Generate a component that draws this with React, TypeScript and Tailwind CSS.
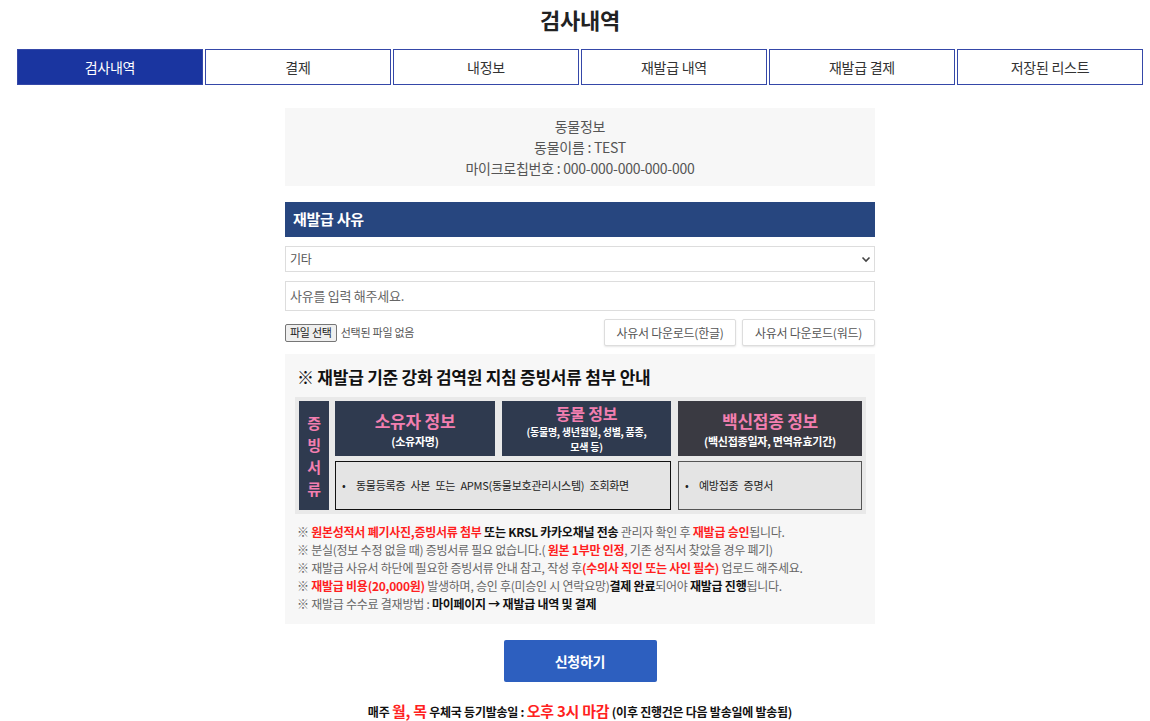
import React from "react";

const font = { fontFamily: '"Noto Sans CJK KR", "Noto Sans", sans-serif' };

export default function App() {
  const tabs = ["검사내역", "결제", "내정보", "재발급 내역", "재발급 결제", "저장된 리스트"];
  return (
    <div className="w-[1150px] h-[721px] bg-white overflow-hidden text-[#333] tracking-[-0.25px]" style={font}>
      <div className="ml-[17px] w-[1126px]">
        <h1 className="text-center text-[22px] font-bold leading-[34px] pt-[2px] text-[#222]">검사내역</h1>
        <div className="mt-[13px] grid grid-cols-6 gap-[2px]">
          {tabs.map((t, i) => (
            <div
              key={t}
              className={
                "h-[36px] flex items-center justify-center text-[14px] border border-[#3548a8] " +
                (i === 0 ? "bg-[#1a35a0] text-white" : "bg-white text-[#333]")
              }
            >
              {t}
            </div>
          ))}
        </div>

        <div className="mx-auto w-[590px] mt-[23px]">
          <div className="bg-[#f7f7f7] h-[78px] pt-[1px] flex flex-col items-center justify-center text-[14px] text-[#555] leading-[21px]">
            <div>동물정보</div>
            <div>동물이름 : TEST</div>
            <div>마이크로칩번호 : 000-000-000-000-000</div>
          </div>

          <div className="mt-[16px] h-[35px] bg-[#27467f] flex items-center pl-[8px] text-white text-[15px] font-bold">
            재발급 사유
          </div>

          <div className="mt-[9px] h-[26px] border border-[#ddd] flex items-center justify-between pl-[4px] pr-[3px] text-[12px] text-[#555]">
            <span>기타</span>
            <svg width="10" height="10" viewBox="0 0 10 10">
              <path d="M1.5 3.5 L5 7 L8.5 3.5" stroke="#444" strokeWidth="1.6" fill="none" />
            </svg>
          </div>

          <div className="mt-[9px] h-[30px] border border-[#ddd] flex items-center pl-[4px] text-[13px] text-[#666]">
            사유를 입력 해주세요.
          </div>

          <div className="mt-[8px] flex items-center justify-between">
            <div className="flex items-center gap-[4px]">
              <div className="h-[18px] px-[4px] flex items-center text-[11px] text-[#222] bg-[#efefef] border border-[#767676] rounded-[2px]">
                파일 선택
              </div>
              <span className="text-[11px] text-[#555]">선택된 파일 없음</span>
            </div>
            <div className="flex gap-[6px]">
              <div className="w-[132px] h-[27px] flex items-center justify-center text-[12px] text-[#555] bg-white border border-[#ddd] rounded-[2px] shadow-[0_1px_2px_rgba(0,0,0,0.1)]">
                사유서 다운로드(한글)
              </div>
              <div className="w-[133px] h-[27px] flex items-center justify-center text-[12px] text-[#555] bg-white border border-[#ddd] rounded-[2px] shadow-[0_1px_2px_rgba(0,0,0,0.1)]">
                사유서 다운로드(워드)
              </div>
            </div>
          </div>

          <div className="mt-[8px] bg-[#f7f7f7] h-[270px] pt-[10px]">
            <div className="pl-[12px] text-[17px] font-bold text-[#111] leading-[26px]">
              ※ 재발급 기준 강화 검역원 지침 증빙서류 첨부 안내
            </div>
            <div className="mt-[7px] ml-[10px] w-[571px] h-[117px] bg-[#e9e9e9] p-[4px] flex gap-[6px]">
              <div className="w-[30px] bg-[#2f3a4f] flex flex-col items-center justify-center text-[#f37fb0] text-[15px] font-bold leading-[22px]">
                <span>증</span>
                <span>빙</span>
                <span>서</span>
                <span>류</span>
              </div>
              <div className="flex-1 flex flex-col gap-[5px]">
                <div className="flex gap-[7px] h-[55px]">
                  <div className="w-[160px] bg-[#2f3a4f] flex flex-col items-center justify-center">
                    <span className="text-[#f37fb0] text-[17px] font-bold leading-[24px]">소유자 정보</span>
                    <span className="text-white text-[11px] font-bold leading-[16px]">(소유자명)</span>
                  </div>
                  <div className="w-[169px] bg-[#2f3a4f] flex flex-col items-center justify-start pt-[1px]">
                    <span className="text-[#f37fb0] text-[16px] font-bold leading-[22px]">동물 정보</span>
                    <span className="text-white text-[10px] font-bold leading-[15px]">(동물명, 생년월일, 성별, 품종,</span>
                    <span className="text-white text-[10px] font-bold leading-[15px]">모색 등)</span>
                  </div>
                  <div className="flex-1 bg-[#3a3a42] flex flex-col items-center justify-center">
                    <span className="text-[#f37fb0] text-[17px] font-bold leading-[24px]">백신접종 정보</span>
                    <span className="text-white text-[11px] font-bold leading-[16px]">(백신접종일자, 면역유효기간)</span>
                  </div>
                </div>
                <div className="flex gap-[7px] flex-1">
                  <div className="w-[336px] bg-[#e4e4e4] border-[1.5px] border-[#111] flex items-center pl-[6px] text-[11px] text-[#222] [word-spacing:3px]">
                    •&nbsp; 동물등록증 사본 또는 APMS(동물보호관리시스템) 조회화면
                  </div>
                  <div className="flex-1 bg-[#e4e4e4] border-[1.5px] border-[#555] flex items-center pl-[6px] text-[11px] text-[#222] [word-spacing:3px]">
                    •&nbsp; 예방접종 증명서
                  </div>
                </div>
              </div>
            </div>
            <div className="mt-[9px] pl-[12px] text-[12px] leading-[18px] text-[#666]">
              <div>
                ※ <b className="text-[#ff1f1f]">원본성적서 폐기사진,증빙서류 첨부</b> <b className="text-[#111]">또는 KRSL 카카오채널 전송</b> 관리자 확인 후{" "}
                <b className="text-[#ff1f1f]">재발급 승인</b>됩니다.
              </div>
              <div>
                ※ 분실(정보 수정 없을 때) 증빙서류 필요 없습니다.( <b className="text-[#ff1f1f]">원본 1부만 인정</b>, 기존 성직서 찾았을 경우 폐기)
              </div>
              <div>
                ※ 재발급 사유서 하단에 필요한 증빙서류 안내 참고, 작성 후<b className="text-[#ff1f1f]">(수의사 직인 또는 사인 필수)</b> 업로드 해주세요.
              </div>
              <div>
                ※ <b className="text-[#ff1f1f]">재발급 비용(20,000원)</b> 발생하며, 승인 후(미승인 시 연락요망)<b className="text-[#111]">결제 완료</b>되어야{" "}
                <b className="text-[#111]">재발급 진행</b>됩니다.
              </div>
              <div>
                ※ 재발급 수수료 결재방법 : <b className="text-[#111]">마이페이지 → 재발급 내역 및 결제</b>
              </div>
            </div>
          </div>

          <div className="mt-[16px] flex justify-center">
            <div className="w-[153px] h-[42px] bg-[#2d5fbf] rounded-[2px] flex items-center justify-center text-white text-[14px] font-bold">
              신청하기
            </div>
          </div>

          <div className="mt-[18px] text-center text-[12px] font-bold text-[#111] leading-[22px]">
            매주 <span className="text-[#ff1f1f] text-[15px]">월, 목</span> 우체국 등기발송일 :{" "}
            <span className="text-[#ff1f1f] text-[15px]">오후 3시 마감</span> (이후 진행건은 다음 발송일에 발송됨)
          </div>
        </div>
      </div>
    </div>
  );
}
